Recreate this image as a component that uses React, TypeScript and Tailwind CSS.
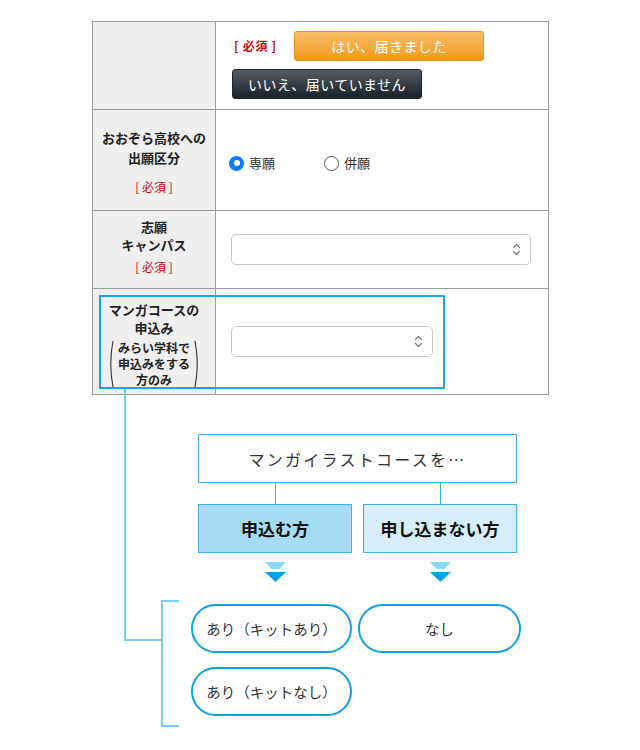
import React from "react";

function UpDown() {
  return (
    <svg width="9" height="15" viewBox="0 0 9 15" fill="none" stroke="#777" strokeWidth="1.1" strokeLinecap="round" strokeLinejoin="round">
      <path d="M1.5 5.5 L4.5 2.5 L7.5 5.5" />
      <path d="M1.5 9.5 L4.5 12.5 L7.5 9.5" />
    </svg>
  );
}

function Select({ w }: { w: string }) {
  return (
    <div className={`flex h-[31px] items-center justify-end rounded-[5px] border border-[#c9c9c9] bg-white pr-[9px] ${w}`}>
      <UpDown />
    </div>
  );
}

function Paren({ right }: { right?: boolean }) {
  return (
    <svg width="6" height="48" viewBox="0 0 6 48" fill="none" stroke="#333" strokeWidth="1.1">
      {right ? <path d="M1 1 Q5.5 24 1 47" /> : <path d="M5 1 Q0.5 24 5 47" />}
    </svg>
  );
}

function Arrow() {
  return (
    <svg width="21" height="20" viewBox="0 0 21 20" className="mt-[9px]">
      <polygon points="0,0 21,0 14.5,7 6.5,7" fill="#8fd5f6" />
      <polygon points="0,10 21,10 10.5,20" fill="#0a9fe6" />
    </svg>
  );
}

export default function App() {
  return (
    <div className="min-h-[750px] bg-white pt-[21px] font-['Noto_Sans_CJK_JP','Noto_Sans',sans-serif] text-[#222]">
      <div className="relative ml-[92px] w-[457px] pb-[24px]">
        {/* table */}
        <div className="border border-[#9c9c9c]">
          {/* row 1 */}
          <div className="flex h-[88px] border-b border-[#9c9c9c]">
            <div className="w-[123px] border-r border-[#9c9c9c] bg-[#efefef]" />
            <div className="flex-1 pl-[16px] pt-[9px]">
              <div className="flex items-center">
                <span className="ml-[2px] w-[60px] whitespace-pre text-[12px] font-bold tracking-[0.06em] text-[#d7000f]">[ 必須 ]</span>
                <div className="flex h-[30px] w-[190px] items-center justify-center rounded-[3px] border border-[#e99210] bg-gradient-to-b from-[#fbbf66] to-[#f39800] text-[14px] tracking-[0.03em] text-white">
                  はい、届きました
                </div>
              </div>
              <div className="mt-[8px] flex h-[30px] w-[190px] items-center justify-center rounded-[3px] border border-[#22282f] bg-gradient-to-b from-[#575c62] to-[#1b222a] text-[14px] tracking-[0.03em] text-white">
                いいえ、届いていません
              </div>
            </div>
          </div>
          {/* row 2 */}
          <div className="flex h-[101px] border-b border-[#9c9c9c]">
            <div className="flex w-[123px] flex-col items-center border-r border-[#9c9c9c] bg-[#efefef] pt-[18px] text-center">
              <div className="text-[13px] font-bold leading-[20px]">
                おおぞら高校への
                <br />
                出願区分
              </div>
              <div className="mt-[10px] whitespace-pre text-[12px] leading-[18px] text-[#d7000f]">[ 必須 ]</div>
            </div>
            <div className="flex flex-1 items-center pt-[6px] text-[13px] text-[#333]">
              <span className="ml-[13px] flex h-[15px] w-[15px] items-center justify-center rounded-full bg-[#0a7bff]">
                <span className="h-[6px] w-[6px] rounded-full bg-white" />
              </span>
              <span className="ml-[5px]">専願</span>
              <span className="ml-[49px] h-[15px] w-[15px] rounded-full border border-[#555] bg-white" />
              <span className="ml-[5px]">併願</span>
            </div>
          </div>
          {/* row 3 */}
          <div className="flex h-[78px] border-b border-[#9c9c9c]">
            <div className="flex w-[123px] flex-col items-center border-r border-[#9c9c9c] bg-[#efefef] pt-[7px] text-center">
              <div className="text-[13px] font-bold leading-[18px]">志願</div>
              <div className="text-[13px] font-bold leading-[18px]">キャンパス</div>
              <div className="mt-[4px] whitespace-pre text-[12px] leading-[18px] text-[#d7000f]">[ 必須 ]</div>
            </div>
            <div className="flex flex-1 items-center pl-[15px]">
              <Select w="w-[300px]" />
            </div>
          </div>
          {/* row 4 */}
          <div className="flex h-[105px]">
            <div className="flex w-[123px] flex-col items-center border-r border-[#9c9c9c] bg-[#efefef] pt-[12px] text-center">
              <div className="text-[13px] font-bold leading-[18px]">
                マンガコースの
                <br />
                申込み
              </div>
              <div className="mt-[3px] flex items-center gap-[4px]">
                <Paren />
                <div className="text-[12px] font-bold leading-[16px]">
                  みらい学科で
                  <br />
                  申込みをする
                  <br />
                  方のみ
                </div>
                <Paren right />
              </div>
            </div>
            <div className="flex flex-1 items-center pl-[15px]">
              <Select w="w-[202px]" />
            </div>
          </div>
        </div>

        {/* highlight overlay */}
        <div className="absolute left-[7px] top-[274px] h-[94px] w-[346px] border-2 border-[#1aa5e8]" />
        {/* connector from highlight */}
        <div className="absolute left-[32px] top-[368px] h-[252px] w-[2px] bg-[#76cdf4]" />
        <div className="absolute left-[32px] top-[618px] h-[2px] w-[39px] bg-[#76cdf4]" />
        {/* bracket */}
        <div className="absolute left-[69px] top-[579px] h-[127px] w-[18px] border-y-2 border-l-2 border-[#76cdf4]" />

        {/* flow */}
        <div className="ml-[106px] mt-[39px] w-[319px]">
          <div className="flex h-[49px] items-center justify-center border border-[#3db2ea] text-[16px] tracking-[0.14em] text-[#333]">
            マンガイラストコースを…
          </div>
          <div className="grid grid-cols-2 gap-x-[11px]">
            <div className="flex flex-col items-center">
              <div className="h-[21px] w-px bg-[#3db2ea]" />
              <div className="flex h-[49px] w-full items-center justify-center border border-[#3db2ea] bg-[#a6dbf6] text-[17px] font-bold text-[#111]">
                申込む方
              </div>
              <Arrow />
            </div>
            <div className="flex flex-col items-center">
              <div className="h-[21px] w-px bg-[#3db2ea]" />
              <div className="flex h-[49px] w-full items-center justify-center border border-[#3db2ea] bg-[#d7eefa] text-[17px] font-bold text-[#111]">
                申し込まない方
              </div>
              <Arrow />
            </div>
          </div>
        </div>

        <div className="ml-[99px] mt-[22px] grid grid-cols-[161px_163px] gap-x-[6px] gap-y-[14px]">
          <div className="flex h-[49px] items-center justify-center rounded-full border-[2.5px] border-[#0ea0e4] text-[14.5px] text-[#333]">
            あり（キットあり）
          </div>
          <div className="flex h-[49px] items-center justify-center rounded-full border-[2.5px] border-[#0ea0e4] text-[14.5px] text-[#333]">
            なし
          </div>
          <div className="flex h-[49px] items-center justify-center rounded-full border-[2.5px] border-[#0ea0e4] text-[14.5px] text-[#333]">
            あり（キットなし）
          </div>
        </div>
      </div>
    </div>
  );
}
